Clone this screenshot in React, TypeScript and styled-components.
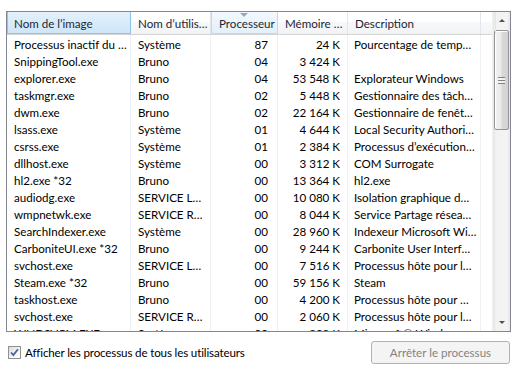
import React from "react";
import styled, { createGlobalStyle, css } from "styled-components";

const GlobalStyle = createGlobalStyle`
  html, body {
    margin: 0;
    padding: 0;
    background: #fff;
  }
  body {
    font-family: "Lato", "Liberation Sans", sans-serif;
    font-size: 11.6px;
    color: #000;
  }
`;

const COLS = "124px 80px 67px 70px 133px 1fr";

// Styled Components
const Page = styled.div`
  width: 517px;
  height: 370px;
  box-sizing: border-box;
  padding: 11px 6px 0 6px;
  display: flex;
  flex-direction: column;
  overflow: hidden;
`;

const ListBox = styled.div`
  height: 321px;
  box-sizing: border-box;
  border: 1px solid #828790;
  display: flex;
  overflow: hidden;
`;

const ListMain = styled.div`
  flex: 1;
  display: flex;
  flex-direction: column;
  min-width: 0;
`;

const HeaderRow = styled.div`
  display: grid;
  grid-template-columns: ${COLS};
  height: 23px;
  box-sizing: border-box;
  border-bottom: 1px solid #d5d5d5;
  background: linear-gradient(#ffffff 0%, #ffffff 45%, #f7f8f9 46%, #f2f3f5 100%);
`;

const HeaderCell = styled.div<{ $state?: "hover" | "sorted" }>`
  position: relative;
  display: flex;
  align-items: center;
  padding: 0 7px;
  box-sizing: border-box;
  border-right: 1px solid #e2e5ea;
  color: #1e2634;
  white-space: nowrap;
  overflow: hidden;
  ${(p) =>
    p.$state === "hover" &&
    css`
      background: linear-gradient(#e3f1fc 0%, #d7ebfa 50%, #cfe6f9 100%);
      border-right: 1px solid #8fc3ea;
      box-shadow: inset 1px 0 0 #8fc3ea, inset 0 -1px 0 #8fc3ea;
    `}
  ${(p) =>
    p.$state === "sorted" &&
    css`
      background: linear-gradient(#f4f9fe 0%, #e9f4fc 50%, #e2f0fb 100%);
      border-right: 1px solid #b9dcf5;
      box-shadow: inset 1px 0 0 #b9dcf5, inset 0 -1px 0 #b9dcf5;
      padding-left: 8px;
    `}
`;

const SortArrow = styled.span`
  position: absolute;
  top: 1px;
  left: 50%;
  transform: translateX(-50%);
  width: 0;
  height: 0;
  border-left: 4px solid transparent;
  border-right: 4px solid transparent;
  border-top: 4px solid #97a7bd;
`;

const Body = styled.div`
  flex: 1;
  position: relative;
  padding-top: 1px;
  overflow: hidden;
`;

const ColumnLines = styled.div`
  position: absolute;
  inset: 0;
  display: grid;
  grid-template-columns: ${COLS};
  pointer-events: none;
  & > div {
    border-right: 1px solid #edf1f6;
  }
  & > div:last-child {
    border-right: none;
  }
`;

const Row = styled.div`
  position: relative;
  display: grid;
  grid-template-columns: ${COLS};
  height: 17px;
  line-height: 17px;
`;

const Cell = styled.div<{ $align?: "left" | "right"; $pad?: string }>`
  padding: ${(p) => p.$pad || "0 6px 0 7px"};
  text-align: ${(p) => p.$align || "left"};
  white-space: nowrap;
  overflow: hidden;
`;

const ScrollBar = styled.div`
  width: 17px;
  display: flex;
  flex-direction: column;
  background: linear-gradient(90deg, #e6e6e6 0%, #f2f2f2 20%, #f4f4f4 80%, #e8e8e8 100%);
  border-left: 1px solid #f0f0f0;
`;

const ScrollArrow = styled.div<{ $down?: boolean }>`
  height: 17px;
  display: flex;
  align-items: center;
  justify-content: center;
  &::before {
    content: "";
    width: 0;
    height: 0;
    border-left: 3px solid transparent;
    border-right: 3px solid transparent;
    ${(p) =>
      p.$down
        ? css`border-top: 3px solid #505050;`
        : css`border-bottom: 3px solid #505050;`}
  }
`;

const Track = styled.div`
  flex: 1;
  padding: 1px 1px 0 1px;
`;

const Thumb = styled.div`
  height: 100px;
  box-sizing: border-box;
  border: 1px solid #959595;
  border-radius: 2px;
  background: linear-gradient(90deg, #f2f2f2 0%, #eaeaea 45%, #d9d9d9 55%, #d2d2d2 100%);
  box-shadow: inset 1px 1px 0 #ffffff;
  display: flex;
  align-items: center;
  justify-content: center;
`;

const Grip = styled.div`
  width: 7px;
  height: 7px;
  background: repeating-linear-gradient(#6b6b6b 0px, #6b6b6b 1px, #f6f6f6 1px, #f6f6f6 3px);
  opacity: 0.8;
`;

const Footer = styled.div`
  display: flex;
  align-items: center;
  justify-content: space-between;
  padding-top: 9px;
  padding-left: 2px;
`;

const CheckLabel = styled.label`
  display: flex;
  align-items: center;
  gap: 4px;
  color: #000;
  letter-spacing: -0.15px;
`;

const CheckBox = styled.span`
  width: 13px;
  height: 13px;
  box-sizing: border-box;
  border: 1px solid #8e8f8f;
  background: linear-gradient(135deg, #dcdcdc 0%, #f6f6f6 60%, #ffffff 100%);
  display: flex;
  align-items: center;
  justify-content: center;
`;

const StopButton = styled.button`
  width: 139px;
  height: 23px;
  box-sizing: border-box;
  border: 1px solid #adb2b5;
  border-radius: 3px;
  background: #f4f4f4;
  color: #838383;
  font-family: inherit;
  font-size: 11.6px;
  padding: 0;
  margin-right: 1px;
`;

const header = [
  { label: "Nom de l’image", state: "hover" as const },
  { label: "Nom d’utilis…" },
  { label: "Processeur", state: "sorted" as const, sort: true },
  { label: "Mémoire …" },
  { label: "Description" },
  { label: "" },
];

const rows: [string, string, string, string, string][] = [
  ["Processus inactif du …", "Système", "87", "24 K", "Pourcentage de temp…"],
  ["SnippingTool.exe", "Bruno", "04", "3 424 K", ""],
  ["explorer.exe", "Bruno", "04", "53 548 K", "Explorateur Windows"],
  ["taskmgr.exe", "Bruno", "02", "5 448 K", "Gestionnaire des tâch…"],
  ["dwm.exe", "Bruno", "02", "22 164 K", "Gestionnaire de fenêt…"],
  ["lsass.exe", "Système", "01", "4 644 K", "Local Security Authori…"],
  ["csrss.exe", "Système", "01", "2 384 K", "Processus d’exécution…"],
  ["dllhost.exe", "Système", "00", "3 312 K", "COM Surrogate"],
  ["hl2.exe *32", "Bruno", "00", "13 364 K", "hl2.exe"],
  ["audiodg.exe", "SERVICE L…", "00", "10 080 K", "Isolation graphique d…"],
  ["wmpnetwk.exe", "SERVICE R…", "00", "8 044 K", "Service Partage résea…"],
  ["SearchIndexer.exe", "Système", "00", "28 960 K", "Indexeur Microsoft Wi…"],
  ["CarboniteUI.exe *32", "Bruno", "00", "9 244 K", "Carbonite User Interf…"],
  ["svchost.exe", "SERVICE L…", "00", "7 516 K", "Processus hôte pour l…"],
  ["Steam.exe *32", "Bruno", "00", "59 156 K", "Steam"],
  ["taskhost.exe", "Bruno", "00", "4 200 K", "Processus hôte pour …"],
  ["svchost.exe", "SERVICE R…", "00", "2 060 K", "Processus hôte pour l…"],
  ["WLIDSVCM.EXE", "Système", "00", "828 K", "Microsoft® Windows …"],
];

const App: React.FC = () => {
  return (
    <>
      <GlobalStyle />
      <Page>
        <ListBox>
          <ListMain>
            <HeaderRow>
              {header.map((h, i) => (
                <HeaderCell key={i} $state={h.state}>
                  {h.sort && <SortArrow />}
                  {h.label}
                </HeaderCell>
              ))}
            </HeaderRow>
            <Body>
              <ColumnLines>
                {header.map((_, i) => (
                  <div key={i} />
                ))}
              </ColumnLines>
              {rows.map((r, i) => (
                <Row key={i}>
                  <Cell>{r[0]}</Cell>
                  <Cell>{r[1]}</Cell>
                  <Cell $align="right" $pad="0 10px 0 0">{r[2]}</Cell>
                  <Cell $align="right" $pad="0 8px 0 0">{r[3]}</Cell>
                  <Cell $pad="0 2px 0 6px">{r[4]}</Cell>
                  <Cell />
                </Row>
              ))}
            </Body>
          </ListMain>
          <ScrollBar>
            <ScrollArrow />
            <Track>
              <Thumb>
                <Grip />
              </Thumb>
            </Track>
            <ScrollArrow $down />
          </ScrollBar>
        </ListBox>
        <Footer>
          <CheckLabel>
            <CheckBox>
              <svg width="9" height="9" viewBox="0 0 9 9">
                <path d="M1 4.5 L3.3 7 L8 1.2" fill="none" stroke="#4a62a0" strokeWidth="1.8" />
              </svg>
            </CheckBox>
            Afficher les processus de tous les utilisateurs
          </CheckLabel>
          <StopButton disabled>Arrêter le processus</StopButton>
        </Footer>
      </Page>
    </>
  );
};

export default App;
